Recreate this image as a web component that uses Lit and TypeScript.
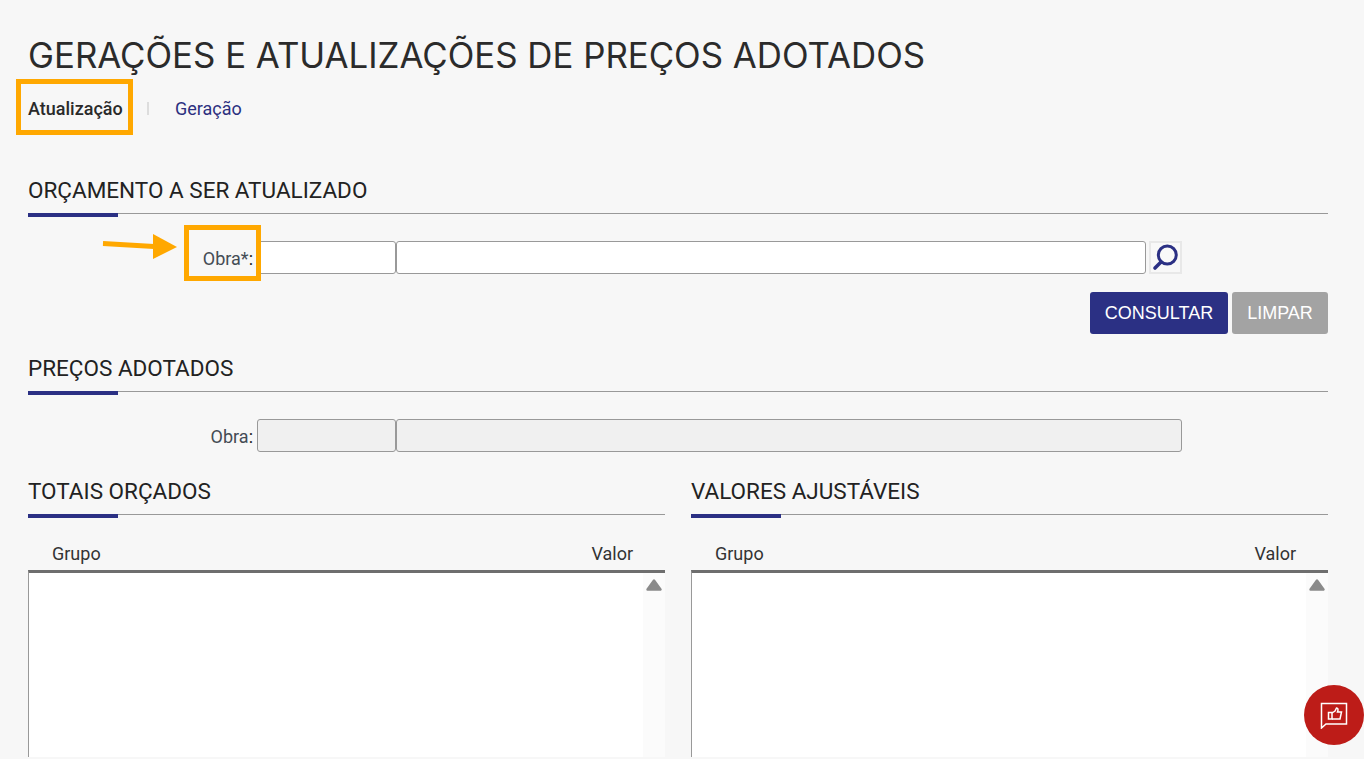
import { LitElement, html, css } from "lit";
import { customElement } from "lit/decorators.js";

@customElement("app-root")
export class AppRoot extends LitElement {
  static styles = css`
    :host { display: block; height: 759px; overflow: hidden; background: #f7f7f7; font-family: Roboto, sans-serif; color: #222; position: relative; }
    .page { padding: 0 36px 0 28px; display: flex; flex-direction: column; }
    h1 { margin: 0; padding-top: 34px; height: 45px; font: 400 34.8px/42px Inter, sans-serif; color: #2b2b2b; white-space: nowrap; }
    .tabs { display: flex; align-items: center; height: 30px; margin-top: 14px; font-size: 18px; }
    .tabs b { font-weight: 500; color: #2a2a2a; width: 119px; }
    .sep { width: 2px; height: 13px; background: #ddd; }
    .tabs a { margin-left: 26px; color: #2c307f; }
    .sec { display: flex; flex-direction: column; }
    .sec h2 { margin: 0; font: 400 22.5px/24px Roboto, sans-serif; color: #222; padding-bottom: 11px; border-bottom: 1px solid #999; position: relative; white-space: nowrap; }
    .sec h2::after { content: ""; position: absolute; left: 0; bottom: -4px; width: 90px; height: 4px; background: #2b3084; }
    .s1 { margin-top: 55px; }
    .row { display: flex; align-items: stretch; height: 33px; margin-top: 27px; }
    .lab { width: 225px; text-align: right; font-size: 18px; line-height: 35px; color: #444c55; box-sizing: border-box; white-space: nowrap; }
    .lab span { color: #222; }
    .inp { box-sizing: border-box; height: 33px; border: 1px solid #999; border-radius: 3px; background: #fff; }
    .i1 { width: 139px; margin-left: 4px; }
    .i2 { width: 750px; }
    .i2b { width: 786px; }
    .ro { background: #f0f0f0; }
    .search { box-sizing: border-box; width: 33px; height: 33px; margin-left: 3px; border: 2px solid #e8e8e8; background: #f8f8f8; display: flex; align-items: center; justify-content: center; }
    .btns { display: flex; justify-content: flex-end; gap: 4px; margin-top: 18px; }
    .btn { height: 42px; border-radius: 3px; color: #fff; font: 400 18px/42px "Liberation Sans", Arial, sans-serif; text-align: center; box-sizing: border-box; }
    .b1 { width: 138px; background: #2b3084; }
    .b2 { width: 96px; background: #a3a3a3; }
    .s2 { margin-top: 22px; }
    .cols { display: grid; grid-template-columns: 637px 637px; gap: 26px; margin-top: 27px; }
    .head { display: flex; justify-content: space-between; padding: 0 32px 0 24px; margin-top: 29px; font-size: 18px; line-height: 19px; color: #333; }
    .panel { box-sizing: border-box; height: 187px; margin-top: 7px; border-top: 3px solid #6e6e6e; border-left: 1px solid #999; background: #fff; display: flex; justify-content: flex-end; }
    .sb { width: 22px; background: #fbfbfb; display: flex; justify-content: center; padding-top: 6px; box-sizing: border-box; }
    .anno { position: absolute; box-sizing: border-box; border: 5px solid #ffa800; pointer-events: none; }
    .a1 { left: 16px; top: 79px; width: 117px; height: 56px; }
    .a2 { left: 184px; top: 225px; width: 77px; height: 56px; }
    .arrow { position: absolute; left: 102px; top: 232px; }
    .fab { position: absolute; left: 1304px; top: 685px; width: 60px; height: 60px; border-radius: 50%; background: #bd1c18; display: flex; align-items: center; justify-content: center; }
  `;

  private section(title: string) {
    return html`<h2>${title}</h2>`;
  }

  private table() {
    return html`<div class="head"><span>Grupo</span><span>Valor</span></div>
      <div class="panel"><div class="sb">
        <svg width="16" height="13" viewBox="0 0 16 13"><path d="M8 1.5 L14.5 10.5 H1.5 Z" fill="#8a8a8a" stroke="#8a8a8a" stroke-width="2.4" stroke-linejoin="round"/></svg>
      </div></div>`;
  }

  render() {
    return html`
      <div class="page">
        <h1>GERAÇÕES E ATUALIZAÇÕES DE PREÇOS ADOTADOS</h1>
        <div class="tabs"><b>Atualização</b><span class="sep"></span><a>Geração</a></div>
        <div class="sec s1">
          ${this.section("ORÇAMENTO A SER ATUALIZADO")}
          <div class="row">
            <div class="lab">Obra*<span>:</span></div>
            <div class="inp i1"></div>
            <div class="inp i2"></div>
            <div class="search">
              <svg width="29" height="29" viewBox="0 0 29 29">
                <circle cx="16.3" cy="12" r="9" fill="#f9f9f9" stroke="#2b3084" stroke-width="3"/>
                <path d="M10 19 L4 25" stroke="#2b3084" stroke-width="3.6" stroke-linecap="round"/>
              </svg>
            </div>
          </div>
          <div class="btns"><div class="btn b1">CONSULTAR</div><div class="btn b2">LIMPAR</div></div>
        </div>
        <div class="sec s2">
          ${this.section("PREÇOS ADOTADOS")}
          <div class="row">
            <div class="lab">Obra<span>:</span></div>
            <div class="inp ro i1"></div>
            <div class="inp ro i2b"></div>
          </div>
        </div>
        <div class="cols">
          <div class="sec">${this.section("TOTAIS ORÇADOS")}${this.table()}</div>
          <div class="sec">${this.section("VALORES AJUSTÁVEIS")}${this.table()}</div>
        </div>
      </div>
      <div class="anno a1"></div>
      <div class="anno a2"></div>
      <svg class="arrow" width="76" height="30" viewBox="0 0 76 30">
        <path d="M1 11.5 L52 14.5" stroke="#ffa800" stroke-width="5" />
        <path d="M51 2 L75 15 L51 27 Z" fill="#ffa800"/>
      </svg>
      <div class="fab">
        <svg width="28" height="28" viewBox="0 0 28 28" fill="none" stroke="#fff" stroke-width="1.5">
          <path d="M1.5 2.5 H26.5 V23 H6 L1.5 27 Z"/>
          <path d="M8.5 11.5 H12 V18 H8.5 Z"/>
          <path d="M12 12 L15 10 L16.5 7 C18 7 18.5 8.5 17.5 11 H21.5 L20 18 H12"/>
        </svg>
      </div>
    `;
  }
}
